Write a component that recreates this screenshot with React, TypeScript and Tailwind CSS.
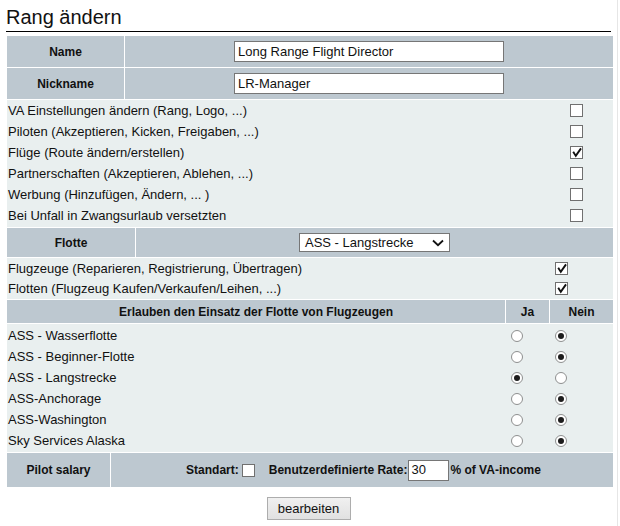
import React from "react";

const font = { fontFamily: '"Liberation Sans", Arial, sans-serif' };

function Box({ checked }: { checked?: boolean }) {
  return (
    <span className="flex h-[13px] w-[13px] shrink-0 items-center justify-center border border-[#707070] bg-white">
      {checked && (
        <svg width="11" height="11" viewBox="0 0 11 11">
          <path d="M2.2 4.8 L4.8 8.9 L10 1.4" fill="none" stroke="#111" strokeWidth="1.9" />
        </svg>
      )}
    </span>
  );
}

function Radio({ on }: { on?: boolean }) {
  return (
    <span className="flex h-[12px] w-[12px] shrink-0 items-center justify-center rounded-full border border-[#8e8f8f] bg-white">
      {on && <span className="h-[6px] w-[6px] rounded-full bg-[#1c1c1c]" />}
    </span>
  );
}

const rights = [
  { label: "VA Einstellungen ändern (Rang, Logo, ...)", on: false },
  { label: "Piloten (Akzeptieren, Kicken, Freigaben, ...)", on: false },
  { label: "Flüge (Route ändern/erstellen)", on: true },
  { label: "Partnerschaften (Akzeptieren, Ablehen, ...)", on: false },
  { label: "Werbung (Hinzufügen, Ändern, ... )", on: false },
  { label: "Bei Unfall in Zwangsurlaub versetzten", on: false },
];

const fleets = [
  { name: "ASS - Wasserflotte", ja: false },
  { name: "ASS - Beginner-Flotte", ja: false },
  { name: "ASS - Langstrecke", ja: true },
  { name: "ASS-Anchorage", ja: false },
  { name: "ASS-Washington", ja: false },
  { name: "Sky Services Alaska", ja: false },
];

export default function App() {
  return (
    <div style={font} className="h-[526px] w-[620px] overflow-hidden bg-white text-[13px] text-[#111]">
      <div className="h-[526px] w-[618px] border-r border-[#e6e6e6]">
        <div className="mx-[6px] h-[32px] border-b border-black pt-[6px] text-[20px] leading-[23px] text-[#111]">
          Rang ändern
        </div>

        <div className="ml-[7px] mt-[4px] flex w-[606px] flex-col gap-[1px] bg-white">
          {/* name */}
          <div className="flex h-[31px] gap-[1px]">
            <div className="flex w-[117px] items-center justify-center bg-[#bdc8d0] text-[12px] font-bold">Name</div>
            <div className="flex flex-1 items-center justify-center bg-[#bdc8d0]">
              <div className="flex h-[21px] w-[270px] items-center border border-[#767676] bg-white pl-[3px] text-[13px]">
                Long Range Flight Director
              </div>
            </div>
          </div>
          <div className="flex h-[31px] gap-[1px]">
            <div className="flex w-[117px] items-center justify-center bg-[#bdc8d0] text-[12px] font-bold">Nickname</div>
            <div className="flex flex-1 items-center justify-center bg-[#bdc8d0]">
              <div className="flex h-[21px] w-[270px] items-center border border-[#767676] bg-white pl-[3px] text-[13px]">
                LR-Manager
              </div>
            </div>
          </div>

          {/* general rights */}
          <div className="flex h-[127px] flex-col bg-[#e9efef] pb-[1px]">
            {rights.map((r) => (
              <div key={r.label} className="flex h-[21px] items-center">
                <span className="w-[563px] pl-[1px]">{r.label}</span>
                <Box checked={r.on} />
              </div>
            ))}
          </div>

          {/* flotte */}
          <div className="flex h-[29px] gap-[1px]">
            <div className="flex w-[128px] items-center justify-center bg-[#bdc8d0] text-[12px] font-bold">Flotte</div>
            <div className="flex flex-1 items-center justify-center bg-[#bdc8d0]">
              <div className="flex h-[19px] w-[151px] items-center justify-between border border-[#767676] bg-white pl-[5px] pr-[5px] text-[13px]">
                <span>ASS - Langstrecke</span>
                <svg width="12" height="8" viewBox="0 0 12 8">
                  <path d="M1 1.5 L6 6.2 L11 1.5" fill="none" stroke="#111" strokeWidth="1.8" />
                </svg>
              </div>
            </div>
          </div>

          <div className="flex h-[41px] flex-col bg-[#e9efef]">
            <div className="flex flex-1 items-center">
              <span className="w-[548px] pl-[1px]">Flugzeuge (Reparieren, Registrierung, Übertragen)</span>
              <Box checked />
            </div>
            <div className="flex flex-1 items-center">
              <span className="w-[548px] pl-[1px]">Flotten (Flugzeug Kaufen/Verkaufen/Leihen, ...)</span>
              <Box checked />
            </div>
          </div>

          {/* fleet usage */}
          <div className="flex h-[23px] gap-[1px] text-[12px] font-bold">
            <div className="flex w-[498px] items-center justify-center bg-[#bdc8d0]">
              Erlauben den Einsatz der Flotte von Flugzeugen
            </div>
            <div className="flex w-[43px] items-center justify-center bg-[#bdc8d0]">Ja</div>
            <div className="flex flex-1 items-center justify-center bg-[#bdc8d0]">Nein</div>
          </div>

          <div className="flex h-[128px] flex-col bg-[#e9efef] pt-[1px]">
            {fleets.map((f) => (
              <div key={f.name} className="flex h-[21px] items-center">
                <span className="w-[504px] pl-[1px]">{f.name}</span>
                <span className="w-[44px]">
                  <Radio on={f.ja} />
                </span>
                <Radio on={!f.ja} />
              </div>
            ))}
          </div>

          {/* salary */}
          <div className="flex h-[34px] gap-[1px]">
            <div className="flex w-[103px] items-center justify-center bg-[#bdc8d0] text-[12px] font-bold">Pilot salary</div>
            <div className="flex flex-1 items-center justify-center bg-[#bdc8d0] pl-[3px] text-[12px] font-bold">
              <span>Standart:</span>
              <span className="ml-[3px] mr-[14px]">
                <Box />
              </span>
              <span>Benutzerdefinierte Rate:</span>
              <span className="mx-[1px] flex h-[21px] w-[41px] items-center border border-[#767676] bg-white pl-[2px] text-[13px] font-normal">
                30
              </span>
              <span>% of VA-income</span>
            </div>
          </div>
        </div>

        <div className="mt-[10px] flex justify-center">
          <button className="h-[23px] w-[84px] border border-[#adadad] bg-gradient-to-b from-[#f0f0f0] to-[#e1e1e1] text-[13px] text-[#111]">
            bearbeiten
          </button>
        </div>
      </div>
    </div>
  );
}
